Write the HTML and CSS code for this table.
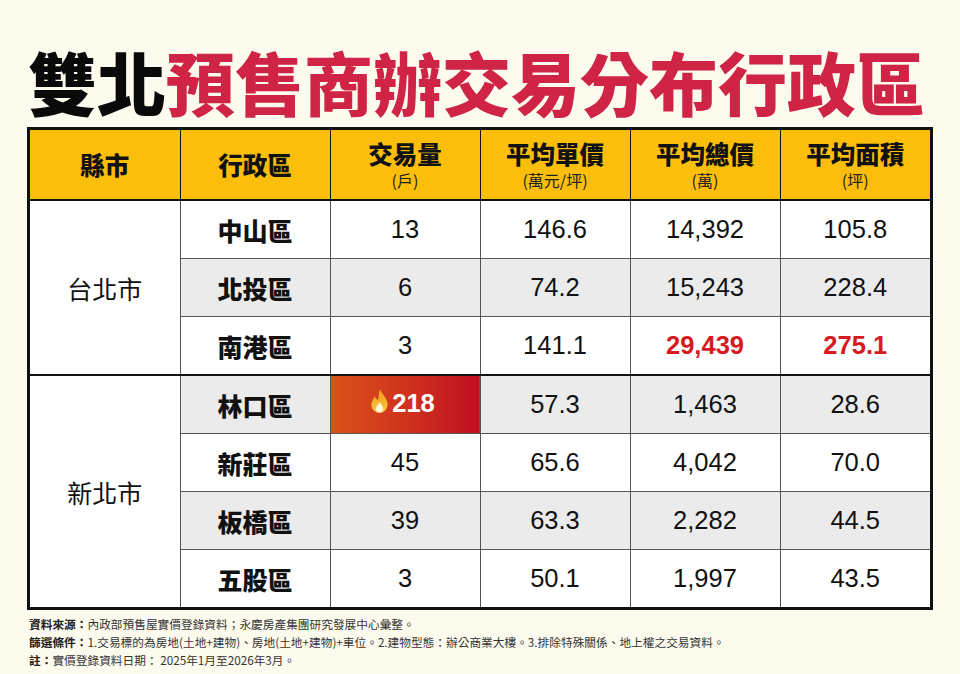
FILE: index.html
```html
<!DOCTYPE html>
<html lang="zh-Hant">
<head>
<meta charset="utf-8">
<title>雙北預售商辦交易分布行政區</title>
<link rel="stylesheet" href="styles.css">
</head>
<body>
<div class="page">
  <h1 class="title"><span class="t-black">雙北</span><span class="t-red">預售商辦交易分布行政區</span></h1>
  <div class="table-wrap">
    <table class="data">
      <thead>
        <tr>
          <th><span class="h-main">縣市</span></th>
          <th><span class="h-main">行政區</span></th>
          <th><span class="h-main">交易量</span><span class="h-sub">(戶)</span></th>
          <th><span class="h-main">平均單價</span><span class="h-sub">(萬元/坪)</span></th>
          <th><span class="h-main">平均總價</span><span class="h-sub">(萬)</span></th>
          <th><span class="h-main">平均面積</span><span class="h-sub">(坪)</span></th>
        </tr>
      </thead>
      <tbody>
        <tr>
          <td class="city" rowspan="3">台北市</td>
          <td class="dist">中山區</td><td class="num">13</td><td class="num">146.6</td><td class="num">14,392</td><td class="num">105.8</td>
        </tr>
        <tr class="alt">
          <td class="dist">北投區</td><td class="num">6</td><td class="num">74.2</td><td class="num">15,243</td><td class="num">228.4</td>
        </tr>
        <tr>
          <td class="dist">南港區</td><td class="num">3</td><td class="num">141.1</td><td class="num hot">29,439</td><td class="num hot">275.1</td>
        </tr>
        <tr class="alt group-start">
          <td class="city" rowspan="4">新北市</td>
          <td class="dist">林口區</td>
          <td class="num fire"><span class="fire-inner"><svg class="flame" viewBox="0 0 16 20" aria-hidden="true"><defs><linearGradient id="fg" x1="0" y1="0" x2="0" y2="1"><stop offset="0" stop-color="#F59A1C"/><stop offset="1" stop-color="#F8C83C"/></linearGradient></defs><path d="M8.5 0 C9.5 4 14.5 7 14.5 12.6 A6.5 6.5 0 0 1 1.5 12.6 C1.5 9.6 3.5 8 4.2 5.8 C5.2 7.8 6.2 8.4 6.8 9 C7.5 6 7.2 3 8.5 0Z" fill="url(#fg)"/><path d="M8 10.5 C9.2 12.4 11 13.4 11 15.8 A3 3 0 0 1 5 15.8 C5 13.8 7 12.8 8 10.5Z" fill="#FFF6D6"/></svg>218</span></td>
          <td class="num">57.3</td><td class="num">1,463</td><td class="num">28.6</td>
        </tr>
        <tr>
          <td class="dist">新莊區</td><td class="num">45</td><td class="num">65.6</td><td class="num">4,042</td><td class="num">70.0</td>
        </tr>
        <tr class="alt">
          <td class="dist">板橋區</td><td class="num">39</td><td class="num">63.3</td><td class="num">2,282</td><td class="num">44.5</td>
        </tr>
        <tr>
          <td class="dist">五股區</td><td class="num">3</td><td class="num">50.1</td><td class="num">1,997</td><td class="num">43.5</td>
        </tr>
      </tbody>
    </table>
  </div>
  <div class="notes">
    <p><b>資料來源：</b>內政部預售屋實價登錄資料；永慶房產集團研究發展中心彙整。</p>
    <p><b>篩選條件：</b>1.交易標的為房地(土地+建物)、房地(土地+建物)+車位。2.建物型態：辦公商業大樓。3.排除特殊關係、地上權之交易資料。</p>
    <p><b>註：</b>實價登錄資料日期： 2025年1月至2026年3月。</p>
  </div>
</div>
</body>
</html>
```

FILE: styles.css
```css
html, body {
  margin: 0;
  padding: 0;
}
body {
  background: #FDFBEE;
  font-family: "Noto Sans CJK TC", "Noto Sans", sans-serif;
  color: #111;
}
.page {
  width: 960px;
  height: 674px;
  box-sizing: border-box;
  padding: 47px 0 0 27px;
}
.title {
  margin: 0 0 11px 0;
  font-size: 69px;
  line-height: 69px;
  height: 69px;
  font-weight: 900;
  letter-spacing: 0;
  white-space: nowrap;
  padding-left: 1px;
}
.t-black { color: #0A0A0A; }
.t-red { color: #CF2445; }

.table-wrap {
  width: 900px;
  border: 3px solid #111;
  background: #fff;
  overflow: hidden;
}
.data {
  width: 100%;
  border-collapse: collapse;
  border-style: hidden;
  table-layout: fixed;
}
.data th {
  height: 69px;
  padding: 0;
  background: #FBBF0B;
  border-right: 1.5px solid #111;
  border-bottom: 2px solid #111;
  vertical-align: middle;
  text-align: center;
}
.h-main {
  display: block;
  font-size: 24.5px;
  line-height: 28px;
  font-weight: 900;
  color: #111;
}
.h-sub {
  display: block;
  font-size: 16px;
  line-height: 19px;
  margin-top: 3px;
  font-weight: 400;
  color: #222;
}
.data td {
  height: 57px;
  padding: 0;
  text-align: center;
  vertical-align: middle;
  border: 1px solid #555;
  font-size: 25px;
  color: #111;
}
.data tr.group-start td {
  border-top: 2px solid #111;
}
.data tr.alt td {
  background: #EBEBEB;
}
.data tr.alt td.city {
  background: #fff;
}
.data td.city {
  font-weight: 400;
  font-size: 25px;
  background: #fff;
}
.data td.dist {
  font-weight: 900;
  font-size: 25px;
}
.data td.num {
  font-family: "Liberation Sans", Arial, sans-serif;
  font-size: 25.5px;
}
.data td.hot {
  color: #D71920;
  font-weight: 700;
}
.data tr.alt td.fire {
  background: linear-gradient(90deg, #D9521A 0%, #CF331C 50%, #BE0F22 100%);
  color: #fff;
  font-weight: 700;
}
.fire-inner {
  display: inline-flex;
  align-items: center;
  gap: 2px;
  margin-left: -6px;
}
.flame {
  width: 21px;
  height: 25px;
  margin-top: -3px;
}
.notes {
  margin-top: 5px;
  padding-left: 2px;
  font-size: 11.7px;
  color: #333;
}
.notes p {
  margin: 0;
  line-height: 18px;
}
.notes b {
  font-weight: 700;
  color: #222;
}
```
